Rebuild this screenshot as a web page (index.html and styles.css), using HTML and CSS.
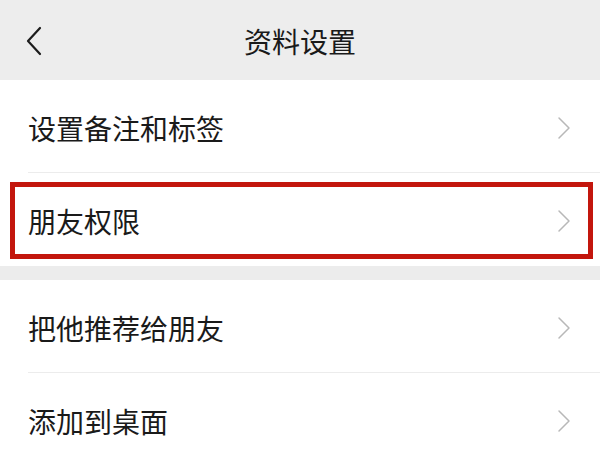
FILE: index.html
```html
<!DOCTYPE html>
<html lang="zh-CN">
<head>
<meta charset="utf-8">
<title>资料设置</title>
<link rel="stylesheet" href="styles.css">
</head>
<body>
<div class="screen">
  <header class="topbar">
    <span class="back">
      <svg width="18" height="30" viewBox="0 0 18 30"><path d="M15 2 L3 15 L15 28" fill="none" stroke="#1c1c1c" stroke-width="2.2" stroke-linecap="round" stroke-linejoin="round"/></svg>
    </span>
    <h1 class="title">资料设置</h1>
  </header>

  <section class="group">
    <div class="row divided">
      <span class="label">设置备注和标签</span>
      <svg class="chev" width="14" height="24" viewBox="0 0 14 24"><path d="M2 2 L12 12 L2 22" fill="none" stroke="#b8b8b8" stroke-width="1.5" stroke-linecap="round" stroke-linejoin="round"/></svg>
    </div>
    <div class="row highlighted">
      <div class="mark">
        <span class="label">朋友权限</span>
        <svg class="chev" width="14" height="24" viewBox="0 0 14 24"><path d="M2 2 L12 12 L2 22" fill="none" stroke="#b8b8b8" stroke-width="1.5" stroke-linecap="round" stroke-linejoin="round"/></svg>
      </div>
    </div>
  </section>

  <div class="band"></div>

  <section class="group">
    <div class="row divided">
      <span class="label">把他推荐给朋友</span>
      <svg class="chev" width="14" height="24" viewBox="0 0 14 24"><path d="M2 2 L12 12 L2 22" fill="none" stroke="#b8b8b8" stroke-width="1.5" stroke-linecap="round" stroke-linejoin="round"/></svg>
    </div>
    <div class="row">
      <span class="label">添加到桌面</span>
      <svg class="chev" width="14" height="24" viewBox="0 0 14 24"><path d="M2 2 L12 12 L2 22" fill="none" stroke="#b8b8b8" stroke-width="1.5" stroke-linecap="round" stroke-linejoin="round"/></svg>
    </div>
  </section>
</div>
</body>
</html>
```

FILE: styles.css
```css
html, body {
  margin: 0;
  padding: 0;
  background: #ffffff;
}

body {
  font-family: "Noto Sans CJK SC", "Noto Sans", sans-serif;
  color: #1a1a1a;
  width: 600px;
  height: 450px;
  overflow: hidden;
}

.screen {
  display: flex;
  flex-direction: column;
}

.topbar {
  height: 80px;
  background: #ededed;
  display: flex;
  align-items: center;
  padding: 0 25px;
  box-sizing: border-box;
}

.back {
  width: 18px;
  height: 30px;
  display: flex;
  align-items: center;
  margin-top: 2px;
}

.title {
  flex: 1;
  margin: 2px 0 0 -18px;
  text-align: center;
  font-size: 28px;
  font-weight: 400;
  line-height: 1;
}

.group {
  display: flex;
  flex-direction: column;
}

.row {
  height: 92px;
  display: flex;
  align-items: center;
  justify-content: space-between;
  margin-left: 28px;
  padding: 3px 29px 0 0;
  box-sizing: border-box;
}

.divided {
  height: 93px;
  border-bottom: 1px solid #ececec;
}

.label {
  font-size: 28px;
  line-height: 1;
}

.chev {
  display: block;
}

.highlighted {
  height: 93px;
  margin-left: 0;
  padding: 9px 7px 7px 10px;
  align-items: stretch;
}

.mark {
  flex: 1;
  border: 5px solid #c3160d;
  display: flex;
  align-items: center;
  justify-content: space-between;
  padding: 1px 17px 0 13px;
}

.band {
  height: 14px;
  background: #ececec;
}
```
